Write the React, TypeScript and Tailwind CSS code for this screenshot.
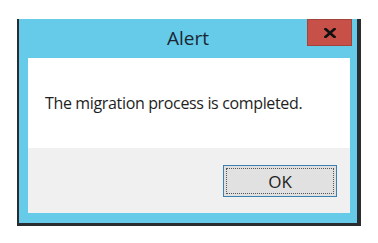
export default function App() {
  return (
    <div
      className="min-h-[243px] bg-white pt-[19px] pl-[17px]"
      style={{ fontFamily: '"Open Sans", "Noto Sans", sans-serif' }}
    >
      <div className="flex h-[207px] w-[344px] flex-col border-b-[3px] border-l-2 border-r-4 border-[#2a2d30] bg-[#65cbe8]">
        {/* title bar */}
        <div className="flex h-[39px] shrink-0 items-start">
          <div className="w-[50px] shrink-0" />
          <div className="flex-1 pt-[7px] text-center text-[19px] leading-[24px] text-[#1b2633]">Alert</div>
          <button className="mr-[5px] flex h-[27px] w-[45px] shrink-0 items-center justify-center border border-[#a2433c] bg-[#c75048]">
            <svg width="12" height="10" viewBox="0 0 12 10">
              <path d="M1.5 1 L10.5 9 M10.5 1 L1.5 9" stroke="#111" strokeWidth="2.6" strokeLinecap="square" />
            </svg>
          </button>
        </div>

        {/* client area */}
        <div className="ml-[9px] mr-[7px] flex flex-col">
          <div className="h-[90px] bg-white pl-[17px] pt-[33px] text-[16px] leading-[24px] tracking-[-0.35px] text-[#1e1e1e]">
            The migration process is completed.
          </div>
          <div className="flex h-[65px] justify-end bg-[#f0f0f0] pr-[13px] pt-[17px]">
            <button className="h-[32px] w-[114px] border border-[#3c7fb1] bg-[#e1e1e1] p-[2px]">
              <div className="flex h-full w-full items-center justify-center border border-dotted border-[#555] text-[17px] leading-none text-[#1e1e1e]">
                OK
              </div>
            </button>
          </div>
        </div>
      </div>
    </div>
  );
}
